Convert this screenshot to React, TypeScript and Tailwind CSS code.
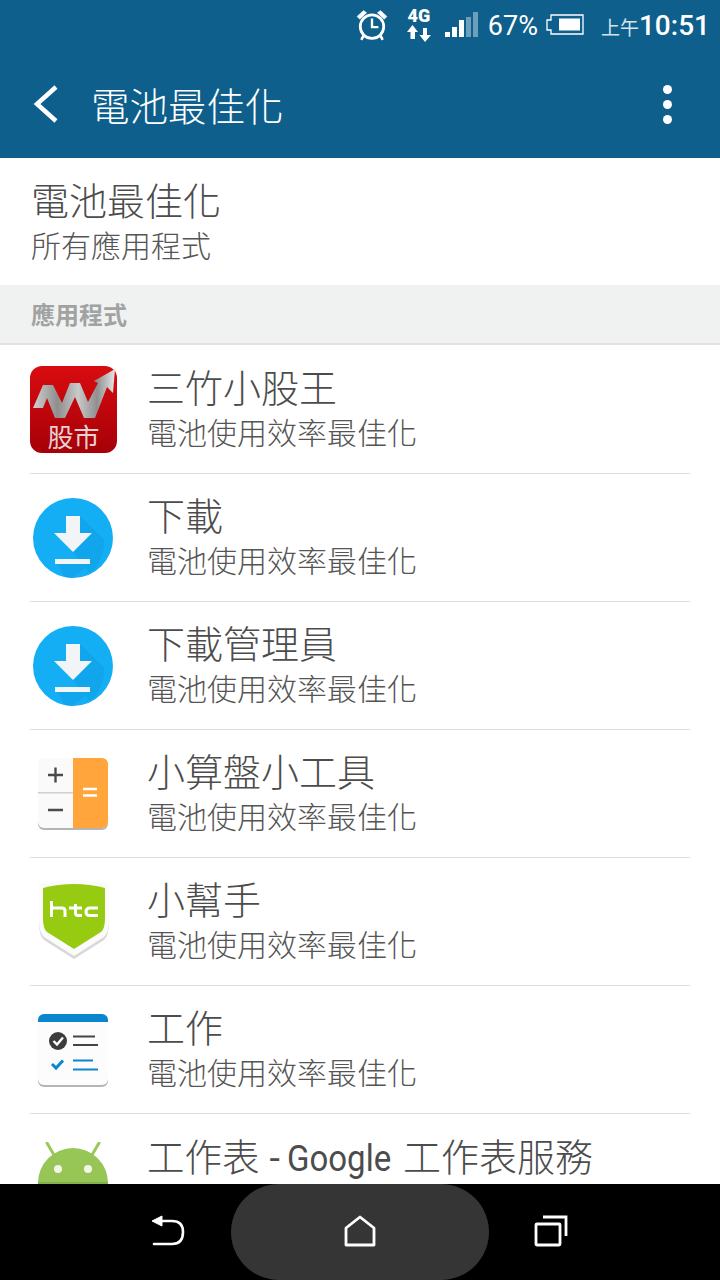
import React from "react";

const font = { fontFamily: '"Noto Sans CJK TC", Roboto, sans-serif' };
const roboto = { fontFamily: "Roboto, sans-serif" };

function StockIcon() {
  return (
    <svg width="88" height="88" viewBox="0 0 88 88">
      <defs>
        <linearGradient id="r" x1="0" y1="0" x2="0" y2="1">
          <stop offset="0" stopColor="#d80c10" />
          <stop offset="1" stopColor="#a60008" />
        </linearGradient>
        <linearGradient id="g" x1="0" y1="0" x2="1" y2="0">
          <stop offset="0" stopColor="#d0d0d0" />
          <stop offset="0.3" stopColor="#8e8e8e" />
          <stop offset="0.55" stopColor="#c9c9c9" />
          <stop offset="0.78" stopColor="#8f8f8f" />
          <stop offset="1" stopColor="#e6e6e6" />
        </linearGradient>
      </defs>
      <rect x="0" y="0" width="87" height="87" rx="12" fill="url(#r)" />
      <path d="M3 42 L13 19 L23 19 L32 37 L40 17 L50 17 L58 36 L68 17 L64 15 L85 3 L83 27 L77 21 L65 52 L54 52 L45 31 L35 52 L25 52 L17 32 L13 42 Z" fill="url(#g)" />
      <text x="43.5" y="81" textAnchor="middle" fontSize="26" fontWeight="400" fill="#e6d2d2" style={font}>股市</text>
    </svg>
  );
}

function DownloadIcon() {
  return (
    <svg width="82" height="82" viewBox="0 0 82 82">
      <circle cx="41" cy="41" r="40" fill="#14aef5" />
      <path d="M23 62 L58 62 L58 67 L40 81 A40 40 0 0 1 33 80 Z M48 19 L72 43 A40 40 0 0 1 58 76 L41 55 L60 36 L48 36 Z" fill="#0f9fe6" opacity="0.6" />
      <path d="M34 19 H48 V36 H60 L41 55 L22 36 H34 Z" fill="#f2f5f7" />
      <rect x="23" y="62" width="35" height="5" fill="#f2f5f7" />
    </svg>
  );
}

function CalcIcon() {
  return (
    <svg width="72" height="76" viewBox="0 0 72 76">
      <rect x="1" y="3" width="70" height="70" rx="6" fill="#b5b5b5" />
      <rect x="1" y="1" width="70" height="70" rx="6" fill="#fafafa" />
      <path d="M36 1 H65 A6 6 0 0 1 71 7 V65 A6 6 0 0 1 65 71 H36 Z" fill="#ffa53b" />
      <rect x="1" y="35" width="35" height="1.5" fill="#cfcfcf" />
      <path d="M11 18 H26 M18.5 10.5 V25.5 M11 53 H26" stroke="#4a4a4a" strokeWidth="2.4" fill="none" />
      <path d="M46 32 H60 M46 38.5 H60" stroke="#fff" strokeWidth="2.4" fill="none" />
    </svg>
  );
}

function HtcIcon() {
  return (
    <svg width="72" height="80" viewBox="0 0 72 80">
      <path d="M36 79 L6 60 Q1 56 1 42 L1 6 Q18 1 36 1 Q54 1 71 6 L71 42 Q71 56 66 60 Z" fill="#d8d8d8" />
      <path d="M36 76 L6 57 Q1 53 1 40 L1 4 Q18 0 36 0 Q54 0 71 4 L71 40 Q71 53 66 57 Z" fill="#fbfbfb" />
      <path d="M36 69 L9 52 Q5 49 5 38 L5 8 Q20 4 36 4 Q52 4 67 8 L67 38 Q67 49 63 52 Z" fill="#96cb12" />
      <path d="M13.5 21 V37 M13.5 28 H24 Q27 28 27 31 V37 M31 28 H44 M37.5 24 V33 Q37.5 35.5 40 35.5 H44 M60 28 H52 Q48 28 48 32 Q48 35.5 52 35.5 H60" stroke="#fff" strokeWidth="3" fill="none" />
    </svg>
  );
}

function TaskIcon() {
  return (
    <svg width="72" height="76" viewBox="0 0 72 76">
      <rect x="1" y="3" width="70" height="71" rx="6" fill="#b5b5b5" />
      <rect x="1" y="1" width="70" height="71" rx="6" fill="#fcfcfc" />
      <path d="M1 9 V7 A6 6 0 0 1 7 1 H65 A6 6 0 0 1 71 7 V9 Z" fill="#0a86cf" />
      <circle cx="21" cy="28" r="9" fill="#3c3c3c" />
      <path d="M16.5 28 L20 31.5 L26 24.5" stroke="#fff" strokeWidth="2.4" fill="none" />
      <path d="M36 23.5 H58 M36 32 H61" stroke="#444" strokeWidth="2" fill="none" />
      <path d="M15 51 L19 55 L26 47.5" stroke="#0a86cf" strokeWidth="3" fill="none" />
      <path d="M36 47.5 H56 M36 56.5 H61" stroke="#0a86cf" strokeWidth="2" fill="none" />
    </svg>
  );
}

function AndroidIcon() {
  return (
    <svg width="72" height="88" viewBox="0 0 72 88" className="shrink-0">
      <path d="M10 1 L17 13 M62 1 L55 13" stroke="#9bc858" strokeWidth="3" strokeLinecap="round" />
      <path d="M1 41 A35 35 0 0 1 71 41 V88 H1 Z" fill="#97c556" />
      <rect x="1" y="40" width="70" height="4" fill="#85b14a" />
      <circle cx="21" cy="27" r="4" fill="#f3f7ea" />
      <circle cx="51" cy="27" r="4" fill="#f3f7ea" />
    </svg>
  );
}

const rows: { title: string; icon: React.ReactNode; offset: string }[] = [
  { title: "三竹小股王", icon: <StockIcon />, offset: "ml-0" },
  { title: "下載", icon: <DownloadIcon />, offset: "ml-[2px]" },
  { title: "下載管理員", icon: <DownloadIcon />, offset: "ml-[2px]" },
  { title: "小算盤小工具", icon: <CalcIcon />, offset: "ml-[7px] mt-[2px]" },
  { title: "小幫手", icon: <HtcIcon />, offset: "ml-[8px] -mt-[4px]" },
  { title: "工作", icon: <TaskIcon />, offset: "ml-[7px] mt-[2px]" },
];

function Row({ title, icon, offset }: { title: string; icon: React.ReactNode; offset: string }) {
  return (
    <div className="h-[128px] mx-[30px] border-b border-[#dfdfdf] flex items-center shrink-0">
      <div className="w-[117px] shrink-0 flex">
        <div className={offset + " flex"}>{icon}</div>
      </div>
      <div className="flex flex-col pb-[6px]">
        <div className="text-[38px] leading-[44px] text-[#4c4c4c]">{title}</div>
        <div className="text-[30px] leading-[38px] text-[#555555] mt-[4px]">電池使用效率最佳化</div>
      </div>
    </div>
  );
}

export default function App() {
  return (
    <div className="w-[720px] h-[1280px] flex flex-col overflow-hidden bg-white font-light" style={font}>
      <div className="bg-[#0e5f8c] h-[158px] shrink-0 flex flex-col">
        <div className="h-[50px] flex items-center justify-end pr-[10px] text-white font-normal">
          <svg width="32" height="32" viewBox="1 1 30 30" className="mr-[19px]" fill="none" stroke="#fff">
            <circle cx="16" cy="17.5" r="11" strokeWidth="2.6" />
            <path d="M16 10 V18 H22" strokeWidth="2.2" />
            <path d="M2 8 L8 2.5 L11 4.5 L4.5 10.5 Z M30 8 L24 2.5 L21 4.5 L27.5 10.5 Z" fill="#fff" strokeWidth="0.5" />
            <path d="M8 26 L6 30 M24 26 L26 30" strokeWidth="2.4" />
          </svg>
          <div className="w-[24px] h-[34px] mr-[14px] flex flex-col items-center">
            <div className="text-[18px] leading-[15px] font-black" style={roboto}>4G</div>
            <svg width="24" height="17" viewBox="0 0 24 17" fill="#fff" className="mt-[2px]">
              <path d="M5.5 0 L11 7 H8 V14 H3.5 V7 H0 Z M18 17 L12.5 10 H16 V3 H20 V10 H24 Z" />
            </svg>
          </div>
          <svg width="33" height="26" viewBox="0 0 33 26" className="mr-[10px]">
            <rect x="0" y="20" width="5" height="5" fill="#fff" />
            <rect x="7" y="15" width="5" height="10" fill="#fff" />
            <rect x="14" y="8" width="5" height="17" fill="#fff" />
            <rect x="21" y="5" width="5" height="20" fill="#fff" opacity="0.4" />
            <rect x="28" y="0" width="5" height="25" fill="#fff" opacity="0.4" />
          </svg>
          <div className="text-[27px] leading-[32px] mr-[8px] mt-[2px]" style={roboto}>67%</div>
          <svg width="38" height="22" viewBox="0 0 38 22" className="mr-[17px]" fill="none">
            <path d="M5 1 H37 V20 H5 V16 H1 V6 H5 Z" stroke="#fff" strokeWidth="1.3" />
            <rect x="13" y="4.5" width="21" height="12" fill="#fff" />
          </svg>
          <div className="text-[19px] leading-[32px] text-[#d5e3ec] mt-[4px]">上午</div>
          <div className="text-[28px] leading-[32px] font-medium mt-[2px]" style={roboto}>10:51</div>
        </div>
        <div className="flex-1 flex items-center pl-[32px] pr-[48px]">
          <svg width="28" height="38" viewBox="0 0 28 38" fill="none" stroke="#fff" strokeWidth="4.5" className="mr-[31px]">
            <path d="M24 2 L5 19 L24 36" />
          </svg>
          <div className="text-[38.5px] leading-[48px] text-white flex-1">電池最佳化</div>
          <div className="flex flex-col gap-[6px]">
            <div className="w-[9px] h-[9px] rounded-full bg-white" />
            <div className="w-[9px] h-[9px] rounded-full bg-white" />
            <div className="w-[9px] h-[9px] rounded-full bg-white" />
          </div>
        </div>
      </div>

      <div className="flex-1 flex flex-col overflow-hidden">
        <div className="h-[127px] shrink-0 pl-[31px] pt-[18px] flex flex-col">
          <div className="text-[38px] leading-[45px] text-[#4c4c4c]">電池最佳化</div>
          <div className="text-[30px] leading-[38px] text-[#555555] mt-[4px]">所有應用程式</div>
        </div>
        <div className="h-[60px] mb-[1px] shrink-0 bg-[#f0f2f2] border-b-2 border-[#e2e2e2] pl-[31px] flex items-center">
          <div className="text-[24px] leading-[30px] font-bold text-[#a1a3a3]">應用程式</div>
        </div>
        {rows.map((r, i) => (
          <Row key={i} {...r} />
        ))}
        <div className="h-[128px] mx-[30px] flex items-start shrink-0 pt-[28px]">
          <div className="w-[117px] shrink-0 flex">
            <div className="ml-[7px] flex"><AndroidIcon /></div>
          </div>
          <div className="flex flex-col">
            <div className="text-[37.5px] leading-[44px] text-[#4c4c4c] -mt-[9px] whitespace-nowrap">
              工作表
              <span style={roboto} className="font-normal ml-[10px] mr-[7px]">-</span>
              <span style={roboto} className="font-normal inline-block w-[105px] origin-left scale-x-[0.88] mr-[11px]">Google</span>
              <span className="text-[38px]">工作表服務</span>
            </div>
          </div>
        </div>
      </div>

      <div className="h-[96px] shrink-0 bg-black flex items-center justify-center">
        <svg width="36" height="32" viewBox="0 0 36 32" fill="none" stroke="#fff" className="mr-[45px] mb-[2px]">
          <path d="M2 6 L12 1 V11 Z" fill="#fff" strokeWidth="1" />
          <path d="M10 6 H22 Q33 6 33 17 Q33 29 22 29 H4" strokeWidth="2.6" strokeLinecap="round" />
        </svg>
        <div className="w-[258px] h-[96px] rounded-[48px] bg-[#353535] flex items-center justify-center">
          <svg width="32" height="32" viewBox="0 0 32 32" fill="none" stroke="#fff" strokeWidth="2.8" strokeLinejoin="round" className="mb-[2px]">
            <path d="M16 2 L30 13 V30 H2 V13 Z" />
          </svg>
        </div>
        <svg width="34" height="32" viewBox="0 0 34 32" fill="none" stroke="#fff" strokeWidth="2.8" className="ml-[45px] mr-[2px] mb-[2px]">
          <rect x="2" y="9" width="24" height="21" rx="1" />
          <path d="M9 2 H32 V21" />
        </svg>
      </div>
    </div>
  );
}
